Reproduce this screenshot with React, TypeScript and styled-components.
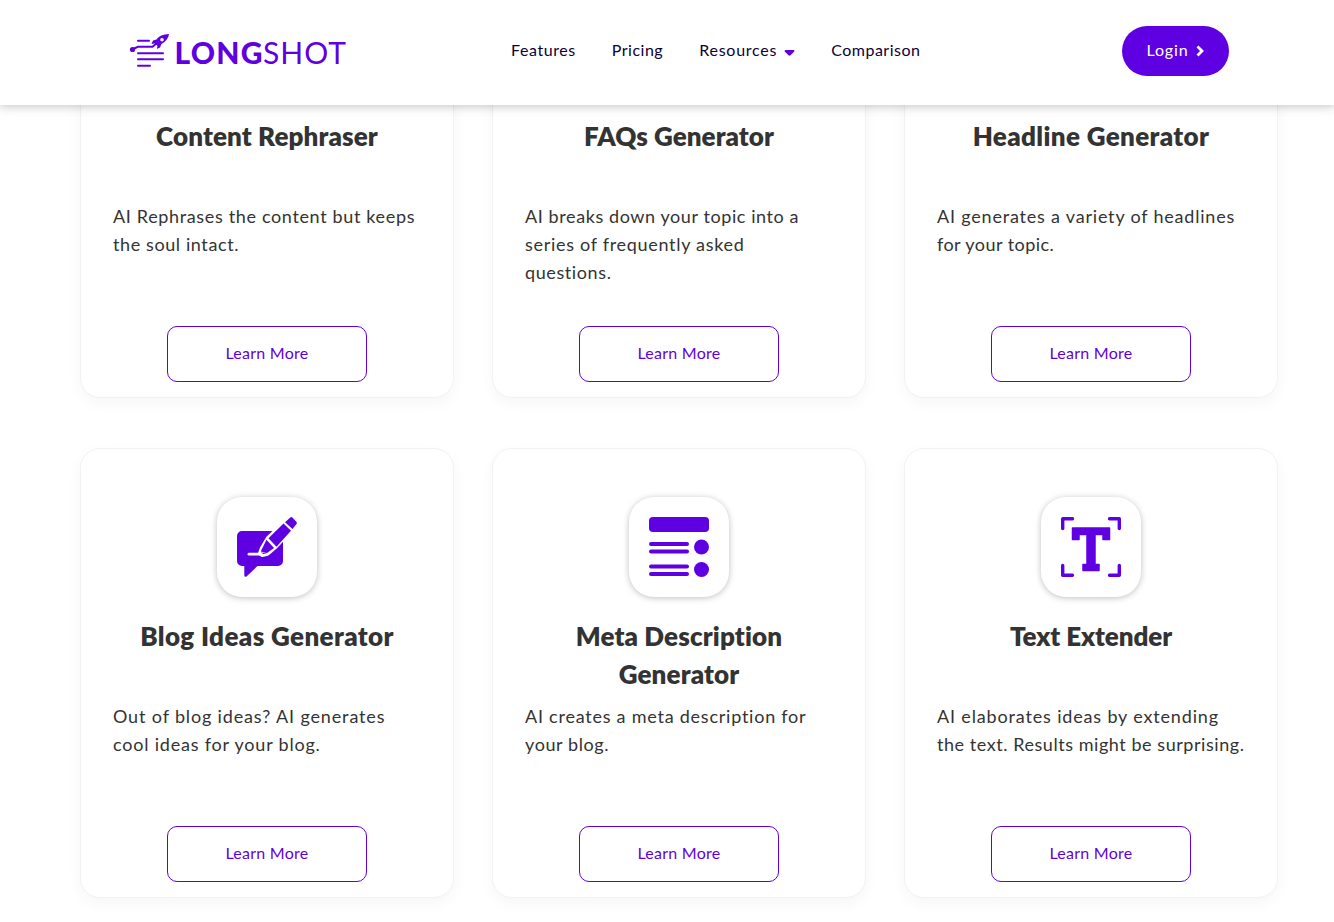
import React from "react";
import styled, { createGlobalStyle } from "styled-components";

const GlobalStyle = createGlobalStyle`
  * {
    box-sizing: border-box;
  }
  body {
    margin: 0;
    background: #fff;
    overflow: hidden;
    font-family: Lato, "Open Sans", sans-serif;
  }
`;

const StyledPage = styled.div`
  height: 922px;
  overflow: hidden;
`;

const StyledHeader = styled.header`
  position: relative;
  z-index: 1;
  display: grid;
  grid-template-columns: 382px 1fr auto;
  align-items: center;
  height: 105px;
  padding: 0 105px 3px 129px;
  background: #fff;
  box-shadow: 0 0 10px 1px rgba(0, 0, 0, 0.25);
`;

const StyledNav = styled.nav`
  display: flex;
  gap: 36px;
  padding-bottom: 2px;
`;

const StyledLink = styled.a<{ $tracking: number }>`
  display: flex;
  align-items: center;
  gap: 7px;
  color: #0c0136;
  font-size: 16px;
  line-height: 24px;
  white-space: nowrap;
  letter-spacing: ${(p) => p.$tracking}px;
  svg {
    margin-top: 6px;
  }
`;

const StyledLogin = styled.button`
  display: flex;
  align-items: center;
  justify-content: center;
  gap: 8px;
  width: 107px;
  height: 50px;
  padding: 0 0 4px;
  border: none;
  border-radius: 25px;
  background: #5f00e2;
  color: #fff;
  font-family: inherit;
  font-size: 16px;
  letter-spacing: 0.8px;
  svg {
    margin-top: 4px;
  }
`;

const StyledGrid = styled.main`
  display: grid;
  grid-template-columns: repeat(3, 374px);
  grid-auto-rows: 450px;
  gap: 50px 38px;
  margin-top: -157px;
  padding-left: 80px;
`;

const StyledCard = styled.article`
  display: flex;
  flex-direction: column;
  align-items: center;
  padding: 48px 32px 15px;
  border: 1px solid #f2f2f5;
  border-radius: 20px;
  background: #fff;
  box-shadow: 0 5px 15px rgba(0, 0, 0, 0.04);
`;

const StyledIcon = styled.div`
  display: grid;
  place-items: center;
  flex: none;
  width: 100px;
  height: 100px;
  border-radius: 25px;
  background: #fff;
  box-shadow: 0 1px 6px rgba(0, 0, 0, 0.25);
`;

const StyledTitle = styled.h3<{ $tracking: number }>`
  width: 250px;
  height: 76px;
  margin: 20px 0 9px;
  display: flex;
  flex-direction: column;
  align-items: center;
  color: #333;
  font-size: 26px;
  font-weight: 800;
  line-height: 38px;
  white-space: nowrap;
  letter-spacing: ${(p) => p.$tracking}px;
`;

const StyledText = styled.p`
  width: 100%;
  margin: 0;
  color: #333;
  font-size: 18px;
  line-height: 28px;
  white-space: nowrap;
`;

const StyledLine = styled.span<{ $tracking: number }>`
  display: block;
  letter-spacing: ${(p) => p.$tracking}px;
`;

const StyledButton = styled.button`
  width: 200px;
  height: 56px;
  margin-top: auto;
  padding: 0 0 4px;
  border: 1px solid #5f00e2;
  border-radius: 10px;
  background: #fff;
  color: #5f00e2;
  font-family: inherit;
  font-size: 16px;
  letter-spacing: 0.25px;
`;

const Logo = () => (
  <svg width="220" height="36" viewBox="0 0 220 36" fill="#5f00e2">
    <g stroke="#5f00e2" strokeWidth="2" strokeLinecap="round" fill="none">
      <path d="M9 7.700h11M4 16l5-2.200h14.500l6-5M9 20.300h25M9 26.300h25M9 32.700h12" />
    </g>
    <circle cx="3.500" cy="16.500" r="2.600" />
    <path
      fillRule="evenodd"
      d="M40 1c-6 .3-10 2-12.500 5.500L24 7.500 22.500 11l3.500-.5 2.500 2.500-.7 3L31 14.500l1.500-3.500C37 8.500 39.500 5 40 1zM33 5a1.800 1.800 0 1 1 0 3.600A1.800 1.800 0 0 1 33 5z"
    />
    <text x="45.500" y="31" fontSize="30" fontWeight="900" textLength="88" fontFamily="Lato">
      LONG
    </text>
    <text x="134" y="31" fontSize="30" textLength="83" fontFamily="Lato">
      SHOT
    </text>
  </svg>
);

const BlogIcon = () => (
  <svg width="60" height="60" viewBox="0 0 60 60" fill="#5f00e2">
    <path d="M5 14h36a5 5 0 0 1 5 5v25a5 5 0 0 1-5 5H20.500L9.500 59.500Q7.300 60.500 7.300 58V49H5a5 5 0 0 1-5-5V19a5 5 0 0 1 5-5z" />
    <path
      d="M46 7l7.500 7-14.500 15.500-8.500 7.200-5.500 1.300-2-1.500 2-5.500 6-10z"
      fill="#fff"
      stroke="#fff"
      strokeWidth="4"
      strokeLinejoin="round"
    />
    <path d="M12 37.200h16" stroke="#fff" strokeWidth="2.800" strokeLinecap="round" />
    <path d="M46.500 6.500l7.500 7.300-14.500 16-8-8.600zM29.500 22.800l7.500 8.200-7 5-6.300-1.500zM23.800 35.500l6.200.4-3.500 1.200z" />
    <path d="M53 .7q1.300-1.200 2.600 0l3.700 4q1.200 1.300 0 2.600L55.500 12 48 5.300z" />
  </svg>
);

const MetaIcon = () => (
  <svg width="60" height="60" viewBox="0 0 60 60" fill="#5f00e2">
    <rect width="60" height="15" rx="4" />
    <rect y="25" width="40" height="4" rx="2" />
    <rect y="32.500" width="40" height="4" rx="2" />
    <rect y="47.500" width="40" height="4" rx="2" />
    <rect y="55" width="40" height="4" rx="2" />
    <circle cx="52.500" cy="30" r="7.500" />
    <circle cx="52.500" cy="52.500" r="7.500" />
  </svg>
);

const TextIcon = () => (
  <svg width="60" height="60" viewBox="0 0 60 60" fill="#5f00e2">
    <path
      d="M1.700 11.500V1.700h9.800M48.500 1.700h9.800v9.800M58.300 48.500v9.800h-9.800M11.500 58.300H1.700v-9.800"
      fill="none"
      stroke="#5f00e2"
      strokeWidth="3.400"
      strokeLinecap="round"
      strokeLinejoin="round"
    />
    <path
      d="M11.500 11h37v11.500H42V17.500h-8V47.500h4v6H22v-6h4V17.500h-8v5h-6.500z"
      stroke="#5f00e2"
      strokeWidth="1.500"
      strokeLinejoin="round"
    />
  </svg>
);

type Line = [text: string, tracking: number];

type Tool = {
  title: string[];
  tracking: number;
  lines: Line[];
  icon?: React.ReactNode;
};

const tools: Tool[] = [
  {
    title: ["Content Rephraser"],
    tracking: 0.12,
    lines: [
      ["AI Rephrases the content but keeps", 0.65],
      ["the soul intact.", 0.6],
    ],
  },
  {
    title: ["FAQs Generator"],
    tracking: 0.06,
    lines: [
      ["AI breaks down your topic into a", 0.59],
      ["series of frequently asked", 0.7],
      ["questions.", 0.6],
    ],
  },
  {
    title: ["Headline Generator"],
    tracking: 0.36,
    lines: [
      ["AI generates a variety of headlines", 0.8],
      ["for your topic.", 0.45],
    ],
  },
  {
    title: ["Blog Ideas Generator"],
    tracking: 0.38,
    lines: [
      ["Out of blog ideas? AI generates", 0.85],
      ["cool ideas for your blog.", 0.8],
    ],
    icon: <BlogIcon />,
  },
  {
    title: ["Meta Description", "Generator"],
    tracking: 0.14,
    lines: [
      ["AI creates a meta description for", 0.76],
      ["your blog.", 0.6],
    ],
    icon: <MetaIcon />,
  },
  {
    title: ["Text Extender"],
    tracking: -0.08,
    lines: [
      ["AI elaborates ideas by extending", 0.84],
      ["the text. Results might be surprising.", 0.55],
    ],
    icon: <TextIcon />,
  },
];

const ToolCard: React.FC<Tool> = ({ title, tracking, lines, icon }) => (
  <StyledCard>
    <StyledIcon>{icon}</StyledIcon>
    <StyledTitle $tracking={tracking}>
      {title.map((part) => (
        <span key={part}>{part}</span>
      ))}
    </StyledTitle>
    <StyledText>
      {lines.map(([text, spacing]) => (
        <StyledLine key={text} $tracking={spacing} children={text} />
      ))}
    </StyledText>
    <StyledButton children={"Learn More"} />
  </StyledCard>
);

const App = () => {
  return (
    <StyledPage>
      <GlobalStyle />
      <StyledHeader>
        <Logo />
        <StyledNav>
          <StyledLink $tracking={0.58}>Features</StyledLink>
          <StyledLink $tracking={0.5}>Pricing</StyledLink>
          <StyledLink $tracking={0.75}>
            Resources
            <svg width="11" height="6" viewBox="0 0 10 6" fill="#5f00e2">
              <path d="M1 0h8q1.500.5.5 1.700L6 5.200q-1 .9-2 0L.5 1.700Q-.5.500 1 0z" />
            </svg>
          </StyledLink>
          <StyledLink $tracking={0.5}>Comparison</StyledLink>
        </StyledNav>
        <StyledLogin>
          Login
          <svg width="8" height="12" viewBox="0 0 8 12" fill="none">
            <path d="M1.500 1.500L6 6l-4.500 4.500" stroke="#fff" strokeWidth="2.800" />
          </svg>
        </StyledLogin>
      </StyledHeader>
      <StyledGrid>
        {tools.map((tool) => (
          <ToolCard key={tool.title[0]} {...tool} />
        ))}
      </StyledGrid>
    </StyledPage>
  );
};

export default App;
